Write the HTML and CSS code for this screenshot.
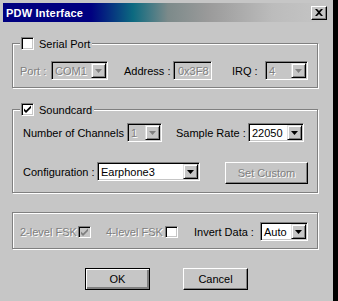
FILE: index.html
```html
<!DOCTYPE html>
<html lang="en">
<head>
    <meta charset="UTF-8">
    <title>PDW Interface</title>
    <link rel="stylesheet" href="styles.css">
</head>
<body>

<div class="window">
    <!-- title bar -->
    <div class="titlebar">
        <span class="title">PDW Interface</span>
        <span class="close-btn">
            <svg width="8" height="7" viewBox="0 0 8 7"><path d="M0 0h2l2 2 2-2h2L5 3.5 8 7H6L4 5 2 7H0l3-3.5z" fill="#000"/></svg>
        </span>
    </div>

    <!-- serial port -->
    <div class="group group-serial">
        <div class="group-title"><span class="check"></span>Serial Port</div>
        <div class="row">
            <span class="label disabled w-port">Port :</span>
            <div class="combo disabled w-com"><span class="combo-text">COM1</span><span class="drop"></span></div>
            <span class="label w-addr gap-addr">Address :</span>
            <div class="field disabled w-hex">0x3F8</div>
            <span class="label w-irq gap-irq">IRQ :</span>
            <div class="combo disabled w-irqbox"><span class="combo-text">4</span><span class="drop"></span></div>
        </div>
    </div>

    <!-- soundcard -->
    <div class="group group-sound">
        <div class="group-title"><span class="check checked"></span>Soundcard</div>
        <div class="row">
            <span class="label w-chan">Number of Channels :</span>
            <div class="combo disabled w-chanbox"><span class="combo-text">1</span><span class="drop"></span></div>
            <span class="label w-rate gap-rate">Sample Rate :</span>
            <div class="combo w-ratebox"><span class="combo-text">22050</span><span class="drop"></span></div>
        </div>
        <div class="row row-config">
            <span class="label w-config">Configuration :</span>
            <div class="combo w-configbox"><span class="combo-text">Earphone3</span><span class="drop"></span></div>
            <div class="button disabled w-custom">Set Custom</div>
        </div>
    </div>

    <!-- fsk options -->
    <div class="group group-fsk">
        <div class="row">
            <span class="label disabled w-fsk2">2-level FSK</span>
            <span class="check small checked disabled-check"></span>
            <span class="label disabled w-fsk4 gap-fsk4">4-level FSK</span>
            <span class="check small"></span>
            <span class="label w-invert gap-invert">Invert Data :</span>
            <div class="combo w-invertbox"><span class="combo-text">Auto</span><span class="drop"></span></div>
        </div>
    </div>

    <!-- dialog buttons -->
    <div class="buttons">
        <div class="button default">OK</div>
        <div class="button cancel">Cancel</div>
    </div>
</div>

</body>
</html>
```

FILE: styles.css
```css
/* window frame */
body {
    margin: 0;
    background-color: #000;
    font-family: "Liberation Sans", Arial, sans-serif;
    font-size: 11px;
    color: #000;
}
.window {
    width: 333px;
    height: 301px;
    background-color: #c6c6c6;
    padding-top: 3px;
    box-sizing: border-box;
}
.titlebar {
    height: 19px;
    margin: 0 3px;
    padding: 0 3px 0 3px;
    display: flex;
    align-items: center;
    justify-content: space-between;
    background: linear-gradient(to right, #000080 0, #000080 88px, #0c6a80 130px, #7c8a8a 165px, #9a9a9a 205px, #bcbcbc 270px, #c6c6c6 100%);
}
.title {
    color: #fff;
    font-weight: bold;
    font-size: 11px;
    letter-spacing: 0.2px;
}
.close-btn {
    width: 16px;
    height: 14px;
    box-sizing: border-box;
    display: flex;
    align-items: center;
    justify-content: center;
    background-color: #c6c6c6;
    border: 1px solid;
    border-color: #fff #000 #000 #fff;
    box-shadow: inset -1px -1px 0 #808080;
}

/* group boxes */
.group {
    position: relative;
    margin-left: 12px;
    width: 306px;
    box-sizing: border-box;
    border: 1px solid #808080;
    box-shadow: 1px 1px 0 #fff, inset 1px 1px 0 #fff;
}
.group-serial {
    margin-top: 21px;
    height: 45px;
    padding: 17px 0 0 7px;
}
.group-sound {
    margin-top: 21px;
    height: 84px;
    padding: 13px 0 0 10px;
}
.group-fsk {
    margin-top: 19px;
    height: 37px;
    padding: 9px 0 0 7px;
}
.group-title {
    position: absolute;
    top: -7px;
    left: 7px;
    padding: 0 2px 0 1px;
    display: flex;
    align-items: center;
    gap: 5px;
    background-color: #c6c6c6;
}
.row {
    display: flex;
    align-items: center;
}
.row-config {
    margin-top: 20px;
    align-items: flex-start;
}
.row-config .label {
    margin-top: 4px;
}

/* labels */
.label {
    white-space: nowrap;
}
.disabled {
    color: #808080;
    text-shadow: 1px 1px 0 #fff;
}
.w-port { width: 31px; }
.w-addr { width: 49px; }
.gap-addr { margin-left: 16px; }
.w-irq { width: 33px; }
.gap-irq { margin-left: 20px; }
.w-chan { width: 104px; }
.w-rate { width: 72px; }
.gap-rate { margin-left: 14px; }
.w-config { width: 74px; }
.w-fsk2 { width: 58px; }
.w-fsk4 { width: 59px; }
.gap-fsk4 { margin-left: 15px; }
.w-invert { width: 66px; }
.gap-invert { margin-left: 16px; }

/* checkboxes */
.check {
    width: 13px;
    height: 13px;
    box-sizing: border-box;
    background-color: #fff;
    border: 1px solid;
    border-color: #808080 #fff #fff #808080;
    box-shadow: inset 1px 1px 0 #000, inset -1px -1px 0 #c6c6c6;
}
.check.small {
    width: 13px;
    height: 12px;
}
.check.checked {
    background-image: url("data:image/svg+xml,%3Csvg xmlns='http://www.w3.org/2000/svg' width='11' height='11' viewBox='0 0 11 11'%3E%3Cpath d='M2 4.5l2 2 5-5v2.5l-5 5-2-2z' fill='%23000'/%3E%3C/svg%3E");
    background-repeat: no-repeat;
    background-position: 0 0;
}
.check.disabled-check {
    background-color: #c6c6c6;
    background-image: url("data:image/svg+xml,%3Csvg xmlns='http://www.w3.org/2000/svg' width='11' height='11' viewBox='0 0 11 11'%3E%3Cpath d='M2 4.5l2 2 5-5v2.5l-5 5-2-2z' fill='%23808080'/%3E%3C/svg%3E");
}

/* combo boxes and fields */
.combo, .field {
    height: 19px;
    box-sizing: border-box;
    display: flex;
    align-items: center;
    background-color: #fff;
    border: 1px solid;
    border-color: #808080 #fff #fff #808080;
    box-shadow: inset 1px 1px 0 #000, inset -1px -1px 0 #c6c6c6;
}
.combo.disabled, .field.disabled {
    background-color: #c6c6c6;
}
.field {
    padding-left: 4px;
}
.combo-text {
    flex: 1;
    padding-left: 3px;
    white-space: nowrap;
    overflow: hidden;
}
.drop {
    width: 15px;
    height: 15px;
    margin-right: 1px;
    box-sizing: border-box;
    background-color: #c6c6c6;
    border: 1px solid;
    border-color: #dfdfdf #000 #000 #dfdfdf;
    box-shadow: inset 1px 1px 0 #fff, inset -1px -1px 0 #808080;
    background-image: url("data:image/svg+xml,%3Csvg xmlns='http://www.w3.org/2000/svg' width='7' height='4'%3E%3Cpath d='M0 0h7L3.5 4z' fill='%23000'/%3E%3C/svg%3E");
    background-repeat: no-repeat;
    background-position: center;
}
.combo.disabled .drop {
    background-image: url("data:image/svg+xml,%3Csvg xmlns='http://www.w3.org/2000/svg' width='7' height='4'%3E%3Cpath d='M0 0h7L3.5 4z' fill='%23808080'/%3E%3C/svg%3E");
}
.w-com { width: 57px; }
.w-hex { width: 39px; }
.w-irqbox { width: 43px; }
.w-chanbox { width: 35px; }
.w-ratebox { width: 56px; }
.w-configbox { width: 103px; }
.w-invertbox { width: 48px; }

/* push buttons */
.button {
    height: 22px;
    box-sizing: border-box;
    display: flex;
    align-items: center;
    justify-content: center;
    background-color: #c6c6c6;
    border: 1px solid;
    border-color: #fff #000 #000 #fff;
    box-shadow: inset -1px -1px 0 #808080;
}
.w-custom {
    width: 83px;
    margin-left: 25px;
}
.buttons {
    display: flex;
    margin-top: 19px;
}
.buttons .button {
    width: 65px;
}
.button.default {
    margin-left: 85px;
    border: 1px solid #000;
    box-shadow: inset 1px 1px 0 #fff, inset -2px -2px 0 #808080;
}
.button.cancel {
    margin-left: 33px;
}
```
